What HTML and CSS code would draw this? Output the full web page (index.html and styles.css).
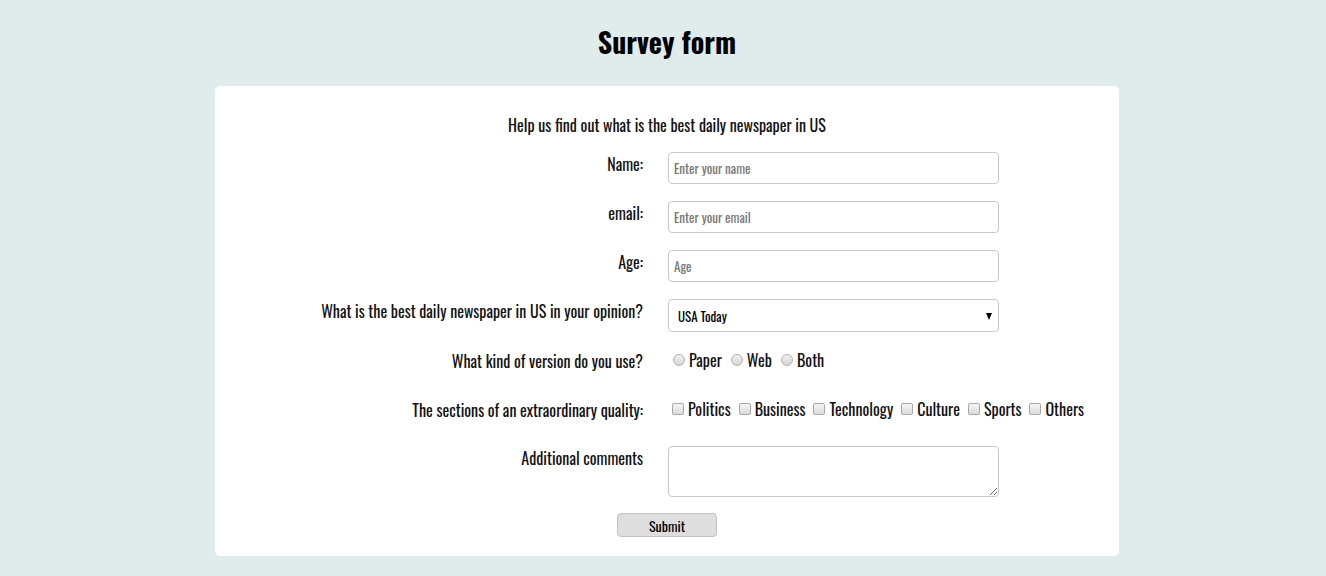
FILE: index.html
```html
<!DOCTYPE html>
<html lang="en">
<head>
<meta charset="utf-8">
<title>Survey form</title>
<link rel="stylesheet" href="styles.css">
</head>
<body>
<h1 class="title">Survey form</h1>
<form class="card">
  <p class="description">Help us find out what is the best daily newspaper in US</p>
  <div class="grid">
    <label class="label" for="name">Name:</label>
    <div class="control"><input id="name" class="field" type="text" placeholder="Enter your name"></div>

    <label class="label" for="email">email:</label>
    <div class="control"><input id="email" class="field" type="email" placeholder="Enter your email"></div>

    <label class="label" for="age">Age:</label>
    <div class="control"><input id="age" class="field" type="number" placeholder="Age"></div>

    <label class="label" for="paper">What is the best daily newspaper in US in your opinion?</label>
    <div class="control">
      <div class="select-wrap">
        <select id="paper" class="select">
          <option>USA Today</option>
          <option>The New York Times</option>
          <option>The Wall Street Journal</option>
        </select>
      </div>
    </div>

    <div class="label">What kind of version do you use?</div>
    <div class="control options">
      <label class="opt"><input class="radio" type="radio" name="ver">Paper</label>
      <label class="opt"><input class="radio" type="radio" name="ver">Web</label>
      <label class="opt"><input class="radio" type="radio" name="ver">Both</label>
    </div>

    <div class="label">The sections of an extraordinary quality:</div>
    <div class="control options checks">
      <label class="opt"><input class="check" type="checkbox">Politics</label>
      <label class="opt"><input class="check" type="checkbox">Business</label>
      <label class="opt"><input class="check" type="checkbox">Technology</label>
      <label class="opt"><input class="check" type="checkbox">Culture</label>
      <label class="opt"><input class="check" type="checkbox">Sports</label>
      <label class="opt"><input class="check" type="checkbox">Others</label>
    </div>

    <label class="label" for="comments">Additional comments</label>
    <div class="control"><textarea id="comments" class="area"></textarea></div>
  </div>
  <div class="actions"><button class="submit" type="submit">Submit</button></div>
</form>
</body>
</html>
```

FILE: styles.css
```css
html, body {
  margin: 0;
  padding: 0;
}
body {
  background: #e0ebeb;
  font-family: "Oswald", "Liberation Sans Narrow", "DejaVu Sans Condensed", "Liberation Sans", sans-serif;
  color: #111;
  height: 576px;
  overflow: hidden;
  padding-left: 8px;
}
.title {
  margin: 22px 0 24px;
  line-height: 40px;
  font-size: 28px;
  font-weight: bold;
  text-align: center;
  color: #000;
}
.card {
  width: 904px;
  margin: 0 auto;
  background: #fff;
  border-radius: 5px;
  padding: 27px 0 19px;
  box-sizing: border-box;
}
.description {
  margin: 0 0 15px;
  line-height: 24px;
  font-size: 16px;
  text-align: center;
}
.grid {
  display: grid;
  grid-template-columns: 428px 331px;
  column-gap: 25px;
  row-gap: 17px;
}
.label {
  text-align: right;
  line-height: 24px;
  font-size: 16px;
  white-space: nowrap;
}
.control {
  min-height: 32px;
}
.field {
  display: block;
  box-sizing: border-box;
  width: 331px;
  height: 32px;
  border: 1px solid #c9c9c9;
  border-radius: 4px;
  padding: 0 5px;
  font-family: inherit;
  font-size: 13px;
  color: #222;
  background: #fff;
  outline: none;
}
.field::placeholder {
  color: #777;
}
.field::-webkit-outer-spin-button,
.field::-webkit-inner-spin-button {
  -webkit-appearance: none;
  margin: 0;
}
.select-wrap {
  position: relative;
  width: 331px;
}
.select-wrap::after {
  content: "";
  position: absolute;
  right: 7px;
  top: 14px;
  border-left: 3.5px solid transparent;
  border-right: 3.5px solid transparent;
  border-top: 7px solid #000;
  pointer-events: none;
}
.select {
  display: block;
  box-sizing: border-box;
  width: 331px;
  height: 33px;
  -webkit-appearance: none;
  appearance: none;
  border: 1px solid #c9c9c9;
  border-radius: 4px;
  padding: 0 9px;
  background: #fff;
  font-family: inherit;
  font-size: 13px;
  color: #000;
  outline: none;
}
.options {
  display: flex;
  align-items: flex-start;
  white-space: nowrap;
  font-size: 16px;
  line-height: 22px;
}
.checks {
  min-height: 31px;
}
.opt {
  display: inline-flex;
  align-items: center;
  margin-right: 4px;
}
.radio {
  -webkit-appearance: none;
  appearance: none;
  width: 12px;
  height: 12px;
  margin: 0 4px 0 5px;
  border-radius: 50%;
  border: 1px solid #b3b3b3;
  background: linear-gradient(#f1f1f1, #d6d6d6);
  box-sizing: border-box;
}
.check {
  -webkit-appearance: none;
  appearance: none;
  width: 12px;
  height: 12px;
  margin: 0 4px 0 4px;
  border-radius: 2px;
  border: 1px solid #a9a9a9;
  background: linear-gradient(#f5f5f5, #dcdcdc);
  box-sizing: border-box;
}
.area {
  display: block;
  box-sizing: border-box;
  width: 331px;
  height: 51px;
  border: 1px solid #c9c9c9;
  border-radius: 4px;
  font-family: inherit;
  font-size: 13px;
  outline: none;
}
.actions {
  display: flex;
  justify-content: center;
  margin-top: 16px;
}
.submit {
  width: 100px;
  height: 24px;
  box-sizing: border-box;
  border: 1px solid #c3c3c3;
  border-radius: 4px;
  background: #dedede;
  font-family: inherit;
  font-weight: 400;
  font-size: 14px;
  color: #000;
  padding: 0;
}
```
